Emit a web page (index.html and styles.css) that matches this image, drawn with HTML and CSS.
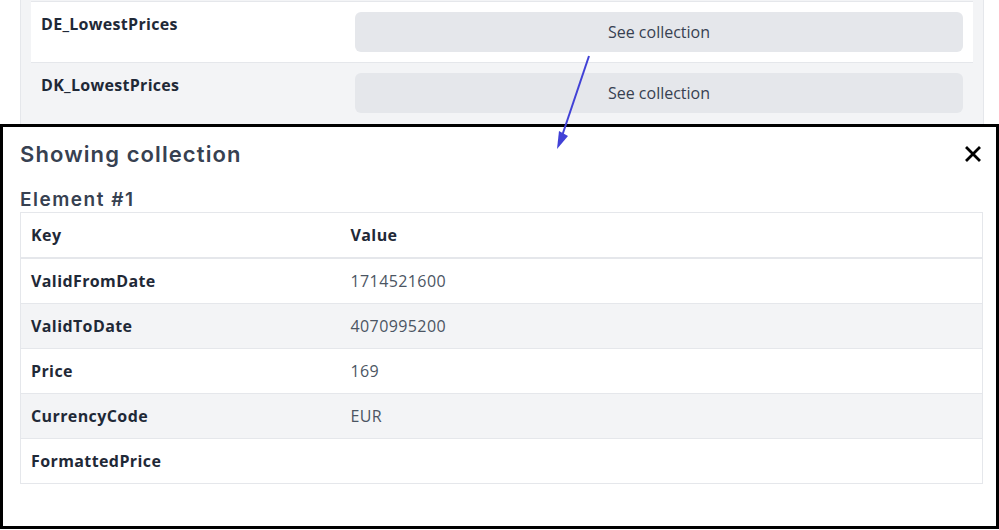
FILE: index.html
```html
<!DOCTYPE html>
<html>

<head>
    <title>Collections</title>
    <link rel="stylesheet" href="styles.css">
</head>

<body>
    <div class="list">
        <div class="list-row">
            <div class="list-key">DE_LowestPrices</div>
            <button class="see-btn">See collection</button>
        </div>
        <div class="list-row odd">
            <div class="list-key">DK_LowestPrices</div>
            <button class="see-btn">See collection</button>
        </div>
    </div>

    <div class="modal">
        <div class="modal-head">
            <h2 class="modal-title">Showing collection</h2>
            <span class="modal-close">
                <svg width="16" height="16" viewBox="0 0 16 16">
                    <path d="M2 2 L14 14 M14 2 L2 14" stroke="#000" stroke-width="2.8" stroke-linecap="square" />
                </svg>
            </span>
        </div>
        <h3 class="element-title">Element #1</h3>
        <table class="kv">
            <thead>
                <tr>
                    <th class="col-key">Key</th>
                    <th>Value</th>
                </tr>
            </thead>
            <tbody>
                <tr>
                    <td class="k">ValidFromDate</td>
                    <td>1714521600</td>
                </tr>
                <tr>
                    <td class="k">ValidToDate</td>
                    <td>4070995200</td>
                </tr>
                <tr>
                    <td class="k">Price</td>
                    <td>169</td>
                </tr>
                <tr>
                    <td class="k">CurrencyCode</td>
                    <td>EUR</td>
                </tr>
                <tr>
                    <td class="k">FormattedPrice</td>
                    <td></td>
                </tr>
            </tbody>
        </table>
    </div>

    <!-- annotation arrow drawn over the screenshot -->
    <svg class="pointer" width="999" height="530" viewBox="0 0 999 530">
        <line x1="589" y1="56" x2="562" y2="136" stroke="#4141d6" stroke-width="2" />
        <polygon points="557,149 559,131 568,136" fill="#4141d6" />
    </svg>
</body>

</html>
```

FILE: styles.css
```css
* {
    margin: 0;
    padding: 0;
    box-sizing: border-box;
}

body {
    font-family: "Open Sans", "Liberation Sans", sans-serif;
    font-size: 16px;
    line-height: 24px;
    color: #1f2937;
    background: #fff;
    overflow: hidden;
}

.list {
    margin-left: 20px;
    width: 964px;
    height: 124px;
    padding: 1px 10px 0;
    background: #f3f4f6;
    border-left: 1px solid #e5e7eb;
    border-right: 1px solid #e5e7eb;
}

.list-row {
    display: grid;
    grid-template-columns: 314px 1fr;
    align-items: start;
    height: 61px;
    padding: 10px;
    border-top: 1px solid #e5e7eb;
    background: #fff;
}

.list-row.odd {
    background: #f3f4f6;
}

.list-key {
    font-weight: 700;
    letter-spacing: 0.3px;
}

.see-btn {
    height: 40px;
    border: none;
    border-radius: 6px;
    background: #e5e7eb;
    color: #374151;
    font-family: inherit;
    font-size: 16px;
}

.modal {
    position: fixed;
    top: 124px;
    left: 0;
    width: 999px;
    height: 405px;
    background: #fff;
    border: 3px solid #000;
    padding: 12px 13px 0 17px;
}

.modal-head {
    display: flex;
    justify-content: space-between;
    align-items: center;
    height: 30px;
}

.modal-title {
    font-family: Inter, "Noto Sans", sans-serif;
    font-size: 22px;
    font-weight: 600;
    color: #374151;
    line-height: 30px;
    letter-spacing: 1.1px;
}

.modal-close {
    display: flex;
    margin-right: 2px;
}

.element-title {
    font-family: Inter, "Noto Sans", sans-serif;
    font-size: 19px;
    font-weight: 600;
    color: #374151;
    line-height: 24px;
    letter-spacing: 1.5px;
    margin-top: 19px;
}

.kv {
    width: 100%;
    border-collapse: collapse;
    border: 1px solid #e5e7eb;
    letter-spacing: 0.4px;
}

.kv th,
.kv td {
    text-align: left;
    padding: 10px;
    border-top: 1px solid #e5e7eb;
    vertical-align: top;
}

.kv th {
    font-weight: 700;
    color: #1f2937;
    border-bottom: 2px solid #e5e7eb;
}

.kv .col-key {
    width: 320px;
}

.kv td {
    color: #4b5563;
}

.kv td.k {
    font-weight: 700;
    color: #1f2937;
}

.kv tbody tr:nth-child(even) td {
    background: #f3f4f6;
}

.pointer {
    position: fixed;
    top: 0;
    left: 0;
    pointer-events: none;
}
```
